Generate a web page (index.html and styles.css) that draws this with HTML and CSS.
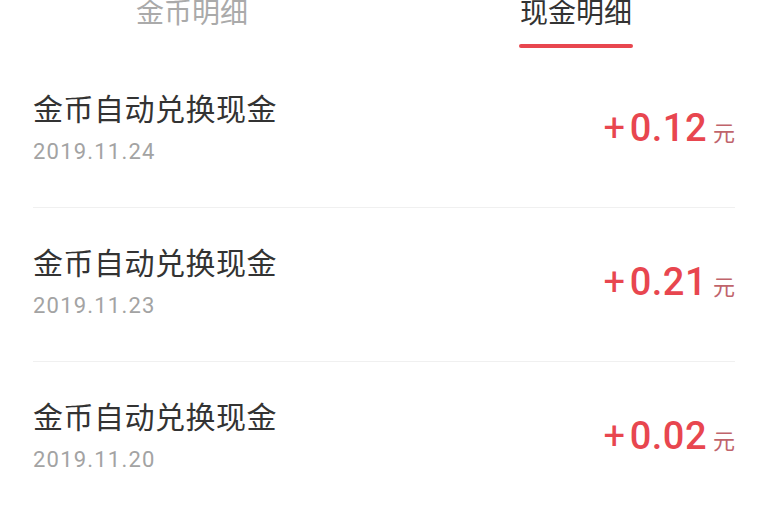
FILE: index.html
```html
<!DOCTYPE html>
<html lang="zh-CN">
<head>
    <meta charset="UTF-8">
    <meta name="viewport" content="width=device-width, initial-scale=1.0">
    <title>现金明细</title>
    <link rel="stylesheet" href="styles.css">
</head>
<body>
    <div class="tabs">
        <div class="tab">金币明细</div>
        <div class="tab on">现金明细</div>
    </div>
    <ul class="list">
        <li class="item">
            <div class="info">
                <p class="title">金币自动兑换现金</p>
                <p class="date">2019.11.24</p>
            </div>
            <div class="money"><span class="plus">+</span>0.12<span class="unit">元</span></div>
        </li>
        <li class="item">
            <div class="info">
                <p class="title">金币自动兑换现金</p>
                <p class="date">2019.11.23</p>
            </div>
            <div class="money"><span class="plus">+</span>0.21<span class="unit">元</span></div>
        </li>
        <li class="item">
            <div class="info">
                <p class="title">金币自动兑换现金</p>
                <p class="date">2019.11.20</p>
            </div>
            <div class="money"><span class="plus">+</span>0.02<span class="unit">元</span></div>
        </li>
    </ul>
</body>
</html>
```
FILE: styles.css
```css
*{
    margin:0;
    padding:0;
}
body{
    background: #fff;
    font-family: Roboto, "Noto Sans CJK SC", sans-serif;
    width: 768px;
    overflow: hidden;
}
.tabs{
    display: flex;
    height: 54px;
    margin-top: -5px;
    margin-bottom: 5px;
}
.tab{
    flex: 1;
    display: flex;
    justify-content: center;
    font-family: "Noto Sans CJK SC", sans-serif;
    font-size: 28px;
    line-height: 32px;
    color: #aaa;
}
.tab.on{
    color: #333;
    position: relative;
}
.tab.on::after{
    content: '';
    position: absolute;
    left: 50%;
    top: 49px;
    width: 114px;
    margin-left: -57px;
    height: 4px;
    border-radius: 2px;
    background: #e8464f;
}
.list{
    list-style-type: none;
    padding: 0 33px;
}
.item{
    display: flex;
    align-items: center;
    justify-content: space-between;
    padding: 37px 0 41px;
    border-bottom: 1px solid #f0f0f0;
}
.item:last-child{
    border-bottom: none;
}
.title{
    font-family: "Noto Sans CJK SC", sans-serif;
    font-size: 30px;
    line-height: 32px;
    letter-spacing: 0.5px;
    color: #333;
}
.date{
    margin-top: 15px;
    font-size: 22px;
    line-height: 28px;
    letter-spacing: 1.2px;
    color: #a3a3a3;
}
.money{
    font-size: 38px;
    font-weight: 500;
    letter-spacing: 0.5px;
    color: #e8464f;
    display: flex;
    align-items: baseline;
    margin-top: -2px;
}
.plus{
    font-weight: 400;
    margin-right: 4px;
}
.unit{
    font-family: "Noto Sans CJK SC", sans-serif;
    font-size: 22px;
    font-weight: 400;
    color: #c0646b;
    margin-left: 6px;
    letter-spacing: 0;
}
```
